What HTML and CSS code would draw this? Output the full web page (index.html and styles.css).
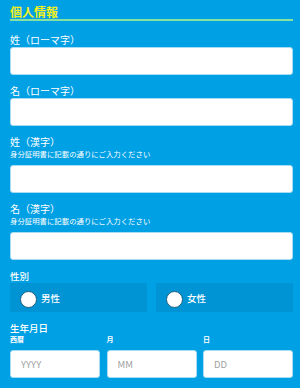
FILE: index.html
```html
<!DOCTYPE html>
<html lang="ja">
<head>
<meta charset="utf-8">
<link rel="stylesheet" href="styles.css">
</head>
<body>
<div class="page">
  <h2 class="title">個人情報</h2>

  <div class="field first">
    <div class="label">姓（ローマ字）</div>
    <input class="text-input" type="text">
  </div>

  <div class="field">
    <div class="label">名（ローマ字）</div>
    <input class="text-input" type="text">
  </div>

  <div class="field">
    <div class="label">姓（漢字）</div>
    <div class="note">身分証明書に記載の通りにご入力ください</div>
    <input class="text-input" type="text">
  </div>

  <div class="field">
    <div class="label">名（漢字）</div>
    <div class="note">身分証明書に記載の通りにご入力ください</div>
    <input class="text-input" type="text">
  </div>

  <div class="field">
    <div class="label strong">性別</div>
    <div class="radios">
      <label class="radio"><span class="dot"></span><span class="radio-text">男性</span></label>
      <label class="radio"><span class="dot"></span><span class="radio-text">女性</span></label>
    </div>
  </div>

  <div class="field">
    <div class="label strong">生年月日</div>
    <div class="dates">
      <div class="date-col">
        <div class="sub">西暦</div>
        <input class="text-input" type="text" placeholder="YYYY">
      </div>
      <div class="date-col">
        <div class="sub">月</div>
        <input class="text-input" type="text" placeholder="MM">
      </div>
      <div class="date-col">
        <div class="sub">日</div>
        <input class="text-input" type="text" placeholder="DD">
      </div>
    </div>
  </div>
</div>
</body>
</html>
```

FILE: styles.css
```css
html, body {
  margin: 0;
  padding: 0;
  background: #00a0e4;
}
body {
  font-family: "Noto Sans CJK JP", "Noto Sans", sans-serif;
  color: #ffffff;
}
.page {
  padding: 5px 7px 0 10px;
}
.title {
  margin: 0;
  font-size: 12px;
  line-height: 14px;
  font-weight: 700;
  color: #f2f01e;
  border-bottom: 2px solid #86e2a0;
}
.field {
  margin-top: 10px;
}
.field.first {
  margin-top: 13px;
}
.label {
  font-size: 10px;
  line-height: 12px;
  margin-bottom: 1px;
}
.label.strong {
  font-weight: 500;
  font-size: 9.5px;
}
.note {
  font-size: 7.4px;
  line-height: 10px;
  margin-bottom: 6px;
  white-space: nowrap;
}
.text-input {
  display: block;
  box-sizing: border-box;
  width: 100%;
  height: 28px;
  margin: 0;
  padding: 0 0 0 10px;
  border: 1px solid #a8dcf2;
  border-radius: 3px;
  background: #ffffff;
  font-family: "Noto Sans CJK JP", "Noto Sans", sans-serif;
  font-size: 9.5px;
  color: #333;
  outline: none;
}
.text-input::placeholder {
  color: #a0a0a0;
}
.radios {
  display: grid;
  grid-template-columns: 1fr 1fr;
  gap: 9px;
}
.radio {
  display: flex;
  align-items: center;
  height: 29px;
  padding-left: 10px;
  background: #0094d4;
}
.dot {
  width: 15px;
  height: 15px;
  border-radius: 50%;
  background: #ffffff;
  border: 1.5px solid #1c5e80;
  margin-top: 3px;
  margin-right: 4px;
}
.radio-text {
  font-size: 9.5px;
  font-weight: 500;
}
.dates {
  display: grid;
  grid-template-columns: 1fr 1fr 1fr;
  gap: 6.5px;
}
.sub {
  font-size: 7px;
  line-height: 9px;
  font-weight: 700;
  margin-bottom: 6px;
}
```
